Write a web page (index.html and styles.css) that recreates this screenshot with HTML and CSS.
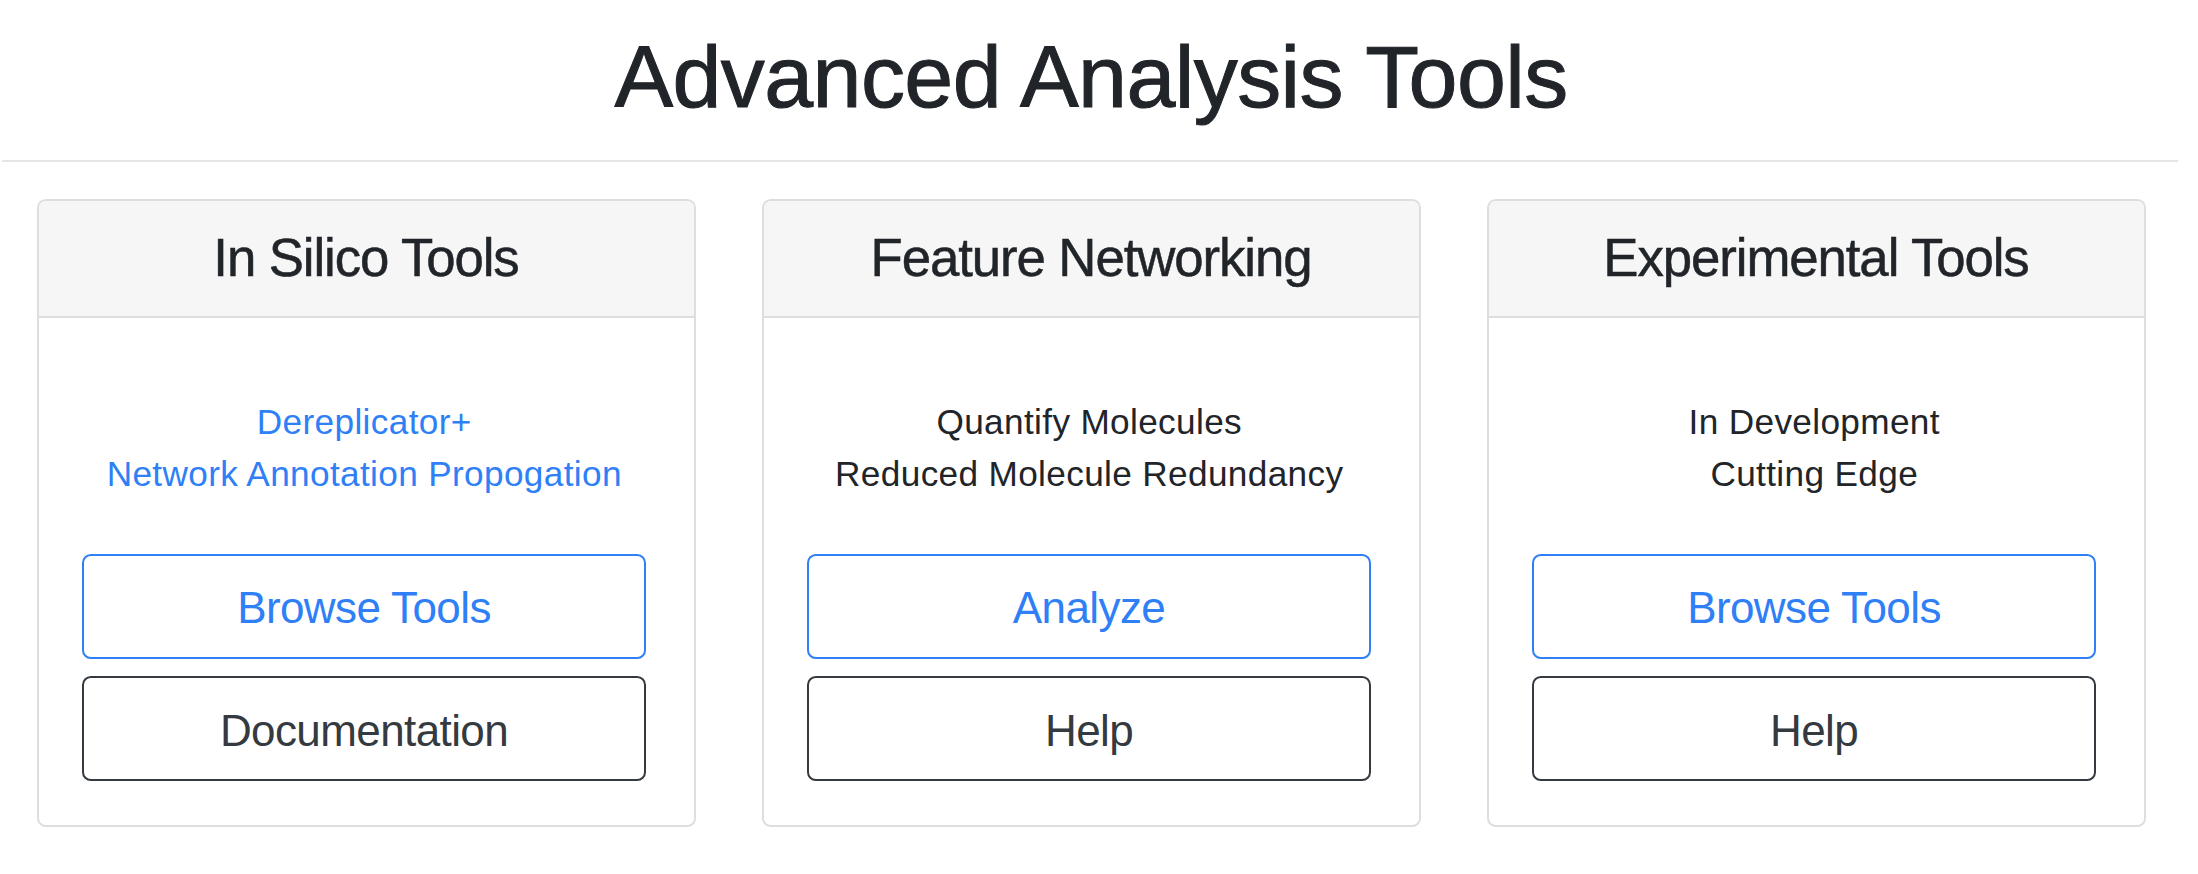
FILE: index.html
```html
<!DOCTYPE html>
<html lang="en">
<head>
<meta charset="utf-8">
<title>Advanced Analysis Tools</title>
<link rel="stylesheet" href="styles.css">
</head>
<body>
<div class="page">
  <h1 class="title">Advanced Analysis Tools</h1>
  <hr class="rule">
  <div class="cards">
    <div class="card">
      <div class="card-header"><h4 class="card-title">In Silico Tools</h4></div>
      <div class="card-body">
        <div class="lines">
          <a class="link" href="#">Dereplicator+</a>
          <a class="link" href="#">Network Annotation Propogation</a>
        </div>
        <a class="btn btn-primary" href="#">Browse Tools</a>
        <a class="btn btn-dark" href="#">Documentation</a>
      </div>
    </div>
    <div class="card">
      <div class="card-header"><h4 class="card-title">Feature Networking</h4></div>
      <div class="card-body">
        <div class="lines">
          <span>Quantify Molecules</span>
          <span>Reduced Molecule Redundancy</span>
        </div>
        <a class="btn btn-primary" href="#">Analyze</a>
        <a class="btn btn-dark" href="#">Help</a>
      </div>
    </div>
    <div class="card">
      <div class="card-header"><h4 class="card-title">Experimental Tools</h4></div>
      <div class="card-body">
        <div class="lines">
          <span>In Development</span>
          <span>Cutting Edge</span>
        </div>
        <a class="btn btn-primary" href="#">Browse Tools</a>
        <a class="btn btn-dark" href="#">Help</a>
      </div>
    </div>
  </div>
</div>
</body>
</html>
```

FILE: styles.css
```css
* { box-sizing: border-box; }

html, body {
  margin: 0;
  padding: 0;
  background: #ffffff;
}

body {
  font-family: "Liberation Sans", Arial, Helvetica, sans-serif;
  color: #212529;
  font-size: 35.2px;
  line-height: 1.5;
}

.page {
  width: 2182px;
}

.title {
  margin: 0;
  padding-top: 24.4px;
  font-size: 88px;
  line-height: 105.6px;
  font-weight: 500;
  letter-spacing: -0.6px;
  -webkit-text-stroke: 1px #212529;
  text-align: center;
  color: #212529;
}

.rule {
  margin: 29.6px 4px 0 2px;
  height: 0;
  border: 0;
  border-top: 2px solid #e5e5e5;
}

.cards {
  display: grid;
  grid-template-columns: repeat(3, 659px);
  column-gap: 66px;
  justify-content: center;
  margin-top: 37px;
}

.card {
  display: flex;
  flex-direction: column;
  border: 2px solid #dedede;
  border-radius: 8.8px;
  background: #ffffff;
}

.card-header {
  background: #f6f6f6;
  border-bottom: 2px solid #dedede;
  border-radius: 7px 7px 0 0;
  padding: 25px 20px 26.6px;
  text-align: center;
}

.card-title {
  margin: 0;
  font-size: 52.8px;
  line-height: 63.4px;
  font-weight: 500;
  letter-spacing: -1.1px;
  -webkit-text-stroke: 0.5px #212529;
  color: #212529;
}

.card-body {
  display: flex;
  flex-direction: column;
  padding: 78.1px 47px 25.8px 43.5px;
}

.lines {
  display: flex;
  flex-direction: column;
  align-items: center;
  text-align: center;
  line-height: 52.8px;
  letter-spacing: 0.35px;
  margin-bottom: 52.3px;
}

.link {
  color: #2f7ff6;
  text-decoration: none;
}

.btn {
  display: block;
  width: 564px;
  height: 105px;
  padding: 19.5px 20px 15.5px;
  border: 2px solid;
  border-radius: 8.8px;
  font-size: 44px;
  line-height: 66px;
  letter-spacing: -0.6px;
  text-align: center;
  text-decoration: none;
  margin-bottom: 17.6px;
  background: transparent;
}

.btn-primary {
  color: #2f7ff6;
  border-color: #2f7ff6;
}

.btn-dark {
  color: #343a40;
  border-color: #343a40;
}
```
